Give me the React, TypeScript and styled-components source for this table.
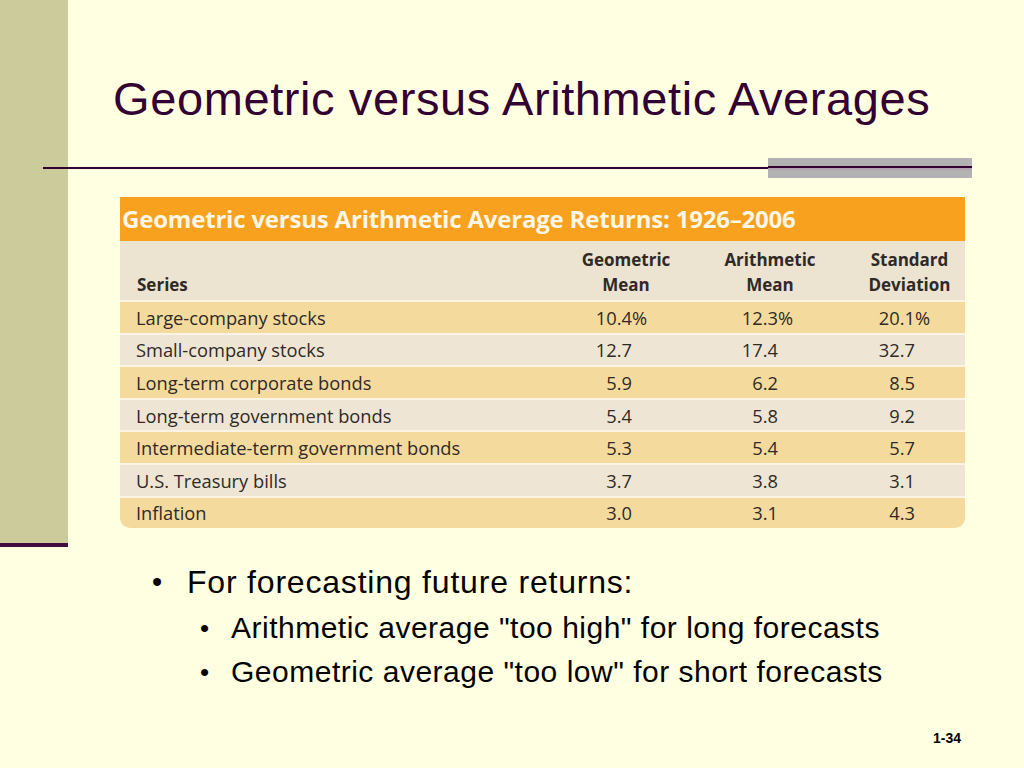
import React from 'react';
import styled, { createGlobalStyle } from 'styled-components';

interface Row {
  series: string;
  values: string[];
}

const rows: Row[] = [
  { series: 'Large-company stocks', values: ['10.4%', '12.3%', '20.1%'] },
  { series: 'Small-company stocks', values: ['12.7', '17.4', '32.7'] },
  { series: 'Long-term corporate bonds', values: ['5.9', '6.2', '8.5'] },
  { series: 'Long-term government bonds', values: ['5.4', '5.8', '9.2'] },
  { series: 'Intermediate-term government bonds', values: ['5.3', '5.4', '5.7'] },
  { series: 'U.S. Treasury bills', values: ['3.7', '3.8', '3.1'] },
  { series: 'Inflation', values: ['3.0', '3.1', '4.3'] },
];

// left offset of the number inside each value column
const numOffsets = [36, 38, 31];

const GlobalStyle = createGlobalStyle`
  html, body {
    margin: 0;
    padding: 0;
    background: #ffffe1;
  }
`;

const Slide = styled.div`
  width: 1024px;
  height: 768px;
  display: flex;
  background: #ffffe1;
  font-family: 'Liberation Sans', Arial, sans-serif;
  overflow: hidden;
`;

const Sidebar = styled.div`
  width: 68px;
  height: 543px;
  flex-shrink: 0;
  background: #cbcb9b;
  border-bottom: 4px solid #420b3c;
`;

const Main = styled.div`
  flex: 1;
  display: flex;
  flex-direction: column;
`;

const Title = styled.h1`
  margin: 0;
  padding: 72px 0 0 45px;
  font-size: 47px;
  font-weight: normal;
  line-height: 54px;
  letter-spacing: 0.6px;
  color: #330033;
  white-space: nowrap;
`;

const RuleRow = styled.div`
  display: flex;
  align-items: center;
  height: 20px;
  width: 929px;
  margin: 32px 0 0 -25px;
`;

const Line = styled.div`
  flex: 1;
  height: 2px;
  background: #330033;
`;

const GrayBlock = styled.div`
  width: 204px;
  height: 20px;
  background: linear-gradient(
    to bottom,
    #b2b2b2 0 8px,
    #330033 8px 10px,
    #b0a4b0 10px 12px,
    #b2b2b2 12px
  );
`;

const Table = styled.div`
  width: 845px;
  margin: 19px 0 0 52px;
  font-family: 'Open Sans', 'Noto Sans', sans-serif;
  color: #2f2a26;
  border-radius: 0 0 10px 10px;
  overflow: hidden;
`;

const TableTitle = styled.div`
  height: 44px;
  background: #f7a11f;
  color: #fff6e4;
  font-weight: 700;
  font-size: 24px;
  line-height: 44px;
  padding-left: 2px;
  letter-spacing: -0.2px;
  white-space: nowrap;
`;

const Grid = styled.div`
  display: grid;
  grid-template-columns: 434px 144px 144px 123px;
  align-items: center;
`;

const HeadRow = styled(Grid)`
  height: 59px;
  background: #ece3d1;
  font-weight: 700;
  font-size: 17px;
  line-height: 25px;
  align-items: end;
  padding-bottom: 3px;
  box-sizing: border-box;
`;

const HeadCell = styled.div<{ $shift?: number }>`
  text-align: center;
  padding-left: ${(p) => p.$shift ?? 0}px;
`;

const SeriesHead = styled.div`
  padding-left: 17px;
`;

const DataRow = styled(Grid)<{ $odd: boolean }>`
  height: 30.6px;
  border-top: 2px solid #fbf3e4;
  background: ${(p) => (p.$odd ? '#f5da9e' : '#eee5d5')};
  font-size: 18.3px;
`;

const SeriesCell = styled.div`
  padding-left: 16px;
`;

const NumCell = styled.div<{ $offset: number }>`
  padding-left: ${(p) => p.$offset}px;
  white-space: nowrap;
`;

const Num = styled.span`
  display: inline-block;
  width: 42px;
  text-align: right;
`;

const Bullets = styled.ul`
  list-style: none;
  margin: 30px 0 0 84px;
  padding: 0;
  color: #000;
`;

const Item = styled.li<{ $sub?: boolean }>`
  display: flex;
  white-space: nowrap;
  font-size: ${(p) => (p.$sub ? 30 : 32)}px;
  letter-spacing: ${(p) => (p.$sub ? 0.5 : 0.8)}px;
  line-height: ${(p) => (p.$sub ? 44 : 48)}px;
  margin-left: ${(p) => (p.$sub ? 48 : 0)}px;
`;

const Dot = styled.span<{ $sub?: boolean }>`
  width: ${(p) => (p.$sub ? 31 : 35)}px;
  flex-shrink: 0;
  font-size: ${(p) => (p.$sub ? 26 : 29)}px;
`;

const PageNum = styled.div`
  margin-top: auto;
  align-self: flex-end;
  margin-right: 63px;
  margin-bottom: 22px;
  font-size: 14px;
  font-weight: 700;
  color: #000;
`;

const App: React.FC = () => {
  return (
    <>
      <GlobalStyle />
      <Slide>
        <Sidebar />
        <Main>
          <Title>Geometric versus Arithmetic Averages</Title>
          <RuleRow>
            <Line />
            <GrayBlock />
          </RuleRow>

          <Table>
            <TableTitle>Geometric versus Arithmetic Average Returns: 1926–2006</TableTitle>
            <HeadRow>
              <SeriesHead>Series</SeriesHead>
              <HeadCell>
                Geometric
                <br />
                Mean
              </HeadCell>
              <HeadCell>
                Arithmetic
                <br />
                Mean
              </HeadCell>
              <HeadCell $shift={12}>
                Standard
                <br />
                Deviation
              </HeadCell>
            </HeadRow>
            {rows.map((row, i) => (
              <DataRow key={row.series} $odd={i % 2 === 0}>
                <SeriesCell>{row.series}</SeriesCell>
                {row.values.map((v, j) => {
                  const pct = v.endsWith('%');
                  return (
                    <NumCell key={j} $offset={numOffsets[j]}>
                      <Num>{pct ? v.slice(0, -1) : v}</Num>
                      {pct && '%'}
                    </NumCell>
                  );
                })}
              </DataRow>
            ))}
          </Table>

          <Bullets>
            <Item>
              <Dot>•</Dot>
              For forecasting future returns:
            </Item>
            <Item $sub>
              <Dot $sub>•</Dot>
              Arithmetic average "too high" for long forecasts
            </Item>
            <Item $sub>
              <Dot $sub>•</Dot>
              Geometric average "too low" for short forecasts
            </Item>
          </Bullets>

          <PageNum>1-34</PageNum>
        </Main>
      </Slide>
    </>
  );
};

export default App;
